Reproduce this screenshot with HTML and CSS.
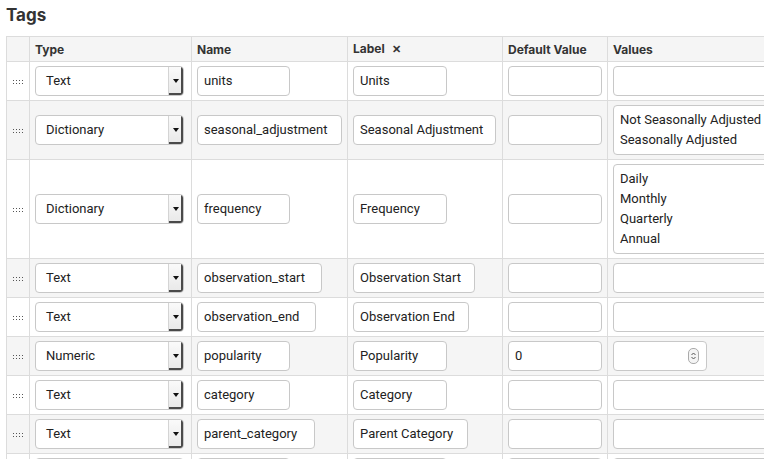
FILE: index.html
```html
<!DOCTYPE html>
<html>
<head>
<meta charset="utf-8">
<link rel="stylesheet" href="styles.css">
</head>
<body>
<h2 class="title">Tags</h2>
<div class="wrap">
<table class="tags">
  <colgroup>
    <col class="c-handle"><col class="c-type"><col class="c-name"><col class="c-label"><col class="c-def"><col class="c-vals">
  </colgroup>
  <thead>
    <tr><th></th><th>Type</th><th>Name</th><th>Label <span class="x">✕</span></th><th>Default Value</th><th>Values</th></tr>
  </thead>
  <tbody>
    <tr>
      <td class="h"><svg class="grip" width="10" height="4" viewBox="0 0 10 4"><g fill="#555"><rect x="0" y="0" width="1" height="1"/><rect x="3" y="0" width="1" height="1"/><rect x="6" y="0" width="1" height="1"/><rect x="9" y="0" width="1" height="1"/><rect x="0" y="3" width="1" height="1"/><rect x="3" y="3" width="1" height="1"/><rect x="6" y="3" width="1" height="1"/><rect x="9" y="3" width="1" height="1"/></g></svg></td>
      <td><div class="sel"><span class="sv">Text</span><span class="arr"></span></div></td>
      <td><div class="inp" style="width:93px">units</div></td>
      <td><div class="inp" style="width:94px">Units</div></td>
      <td><div class="inp w-def"></div></td>
      <td><div class="inp w-val"></div></td>
    </tr>
    <tr class="alt">
      <td class="h"><svg class="grip" width="10" height="4" viewBox="0 0 10 4"><g fill="#555"><rect x="0" y="0" width="1" height="1"/><rect x="3" y="0" width="1" height="1"/><rect x="6" y="0" width="1" height="1"/><rect x="9" y="0" width="1" height="1"/><rect x="0" y="3" width="1" height="1"/><rect x="3" y="3" width="1" height="1"/><rect x="6" y="3" width="1" height="1"/><rect x="9" y="3" width="1" height="1"/></g></svg></td>
      <td><div class="sel"><span class="sv">Dictionary</span><span class="arr"></span></div></td>
      <td><div class="inp" style="width:145px">seasonal_adjustment</div></td>
      <td><div class="inp" style="width:143px">Seasonal Adjustment</div></td>
      <td><div class="inp w-def"></div></td>
      <td><div class="list"><div>Not Seasonally Adjusted</div><div>Seasonally Adjusted</div></div></td>
    </tr>
    <tr>
      <td class="h"><svg class="grip" width="10" height="4" viewBox="0 0 10 4"><g fill="#555"><rect x="0" y="0" width="1" height="1"/><rect x="3" y="0" width="1" height="1"/><rect x="6" y="0" width="1" height="1"/><rect x="9" y="0" width="1" height="1"/><rect x="0" y="3" width="1" height="1"/><rect x="3" y="3" width="1" height="1"/><rect x="6" y="3" width="1" height="1"/><rect x="9" y="3" width="1" height="1"/></g></svg></td>
      <td><div class="sel"><span class="sv">Dictionary</span><span class="arr"></span></div></td>
      <td><div class="inp" style="width:93px">frequency</div></td>
      <td><div class="inp" style="width:94px">Frequency</div></td>
      <td><div class="inp w-def"></div></td>
      <td><div class="list"><div>Daily</div><div>Monthly</div><div>Quarterly</div><div>Annual</div></div></td>
    </tr>
    <tr class="alt">
      <td class="h"><svg class="grip" width="10" height="4" viewBox="0 0 10 4"><g fill="#555"><rect x="0" y="0" width="1" height="1"/><rect x="3" y="0" width="1" height="1"/><rect x="6" y="0" width="1" height="1"/><rect x="9" y="0" width="1" height="1"/><rect x="0" y="3" width="1" height="1"/><rect x="3" y="3" width="1" height="1"/><rect x="6" y="3" width="1" height="1"/><rect x="9" y="3" width="1" height="1"/></g></svg></td>
      <td><div class="sel"><span class="sv">Text</span><span class="arr"></span></div></td>
      <td><div class="inp" style="width:125px">observation_start</div></td>
      <td><div class="inp" style="width:122px">Observation Start</div></td>
      <td><div class="inp w-def"></div></td>
      <td><div class="inp w-val"></div></td>
    </tr>
    <tr>
      <td class="h"><svg class="grip" width="10" height="4" viewBox="0 0 10 4"><g fill="#555"><rect x="0" y="0" width="1" height="1"/><rect x="3" y="0" width="1" height="1"/><rect x="6" y="0" width="1" height="1"/><rect x="9" y="0" width="1" height="1"/><rect x="0" y="3" width="1" height="1"/><rect x="3" y="3" width="1" height="1"/><rect x="6" y="3" width="1" height="1"/><rect x="9" y="3" width="1" height="1"/></g></svg></td>
      <td><div class="sel"><span class="sv">Text</span><span class="arr"></span></div></td>
      <td><div class="inp" style="width:119px">observation_end</div></td>
      <td><div class="inp" style="width:116px">Observation End</div></td>
      <td><div class="inp w-def"></div></td>
      <td><div class="inp w-val"></div></td>
    </tr>
    <tr class="alt">
      <td class="h"><svg class="grip" width="10" height="4" viewBox="0 0 10 4"><g fill="#555"><rect x="0" y="0" width="1" height="1"/><rect x="3" y="0" width="1" height="1"/><rect x="6" y="0" width="1" height="1"/><rect x="9" y="0" width="1" height="1"/><rect x="0" y="3" width="1" height="1"/><rect x="3" y="3" width="1" height="1"/><rect x="6" y="3" width="1" height="1"/><rect x="9" y="3" width="1" height="1"/></g></svg></td>
      <td><div class="sel"><span class="sv">Numeric</span><span class="arr"></span></div></td>
      <td><div class="inp" style="width:93px">popularity</div></td>
      <td><div class="inp" style="width:94px">Popularity</div></td>
      <td><div class="inp w-def">0</div></td>
      <td><div class="inp w-num"><span class="spin"><svg width="7" height="10" viewBox="0 0 7 10"><path d="M1.5 4 L3.5 2 L5.5 4 M1.5 6 L3.5 8 L5.5 6" fill="none" stroke="#555" stroke-width="1"/></svg></span></div></td>
    </tr>
    <tr>
      <td class="h"><svg class="grip" width="10" height="4" viewBox="0 0 10 4"><g fill="#555"><rect x="0" y="0" width="1" height="1"/><rect x="3" y="0" width="1" height="1"/><rect x="6" y="0" width="1" height="1"/><rect x="9" y="0" width="1" height="1"/><rect x="0" y="3" width="1" height="1"/><rect x="3" y="3" width="1" height="1"/><rect x="6" y="3" width="1" height="1"/><rect x="9" y="3" width="1" height="1"/></g></svg></td>
      <td><div class="sel"><span class="sv">Text</span><span class="arr"></span></div></td>
      <td><div class="inp" style="width:93px">category</div></td>
      <td><div class="inp" style="width:94px">Category</div></td>
      <td><div class="inp w-def"></div></td>
      <td><div class="inp w-val"></div></td>
    </tr>
    <tr class="alt">
      <td class="h"><svg class="grip" width="10" height="4" viewBox="0 0 10 4"><g fill="#555"><rect x="0" y="0" width="1" height="1"/><rect x="3" y="0" width="1" height="1"/><rect x="6" y="0" width="1" height="1"/><rect x="9" y="0" width="1" height="1"/><rect x="0" y="3" width="1" height="1"/><rect x="3" y="3" width="1" height="1"/><rect x="6" y="3" width="1" height="1"/><rect x="9" y="3" width="1" height="1"/></g></svg></td>
      <td><div class="sel"><span class="sv">Text</span><span class="arr"></span></div></td>
      <td><div class="inp" style="width:118px">parent_category</div></td>
      <td><div class="inp" style="width:115px">Parent Category</div></td>
      <td><div class="inp w-def"></div></td>
      <td><div class="inp w-val"></div></td>
    </tr>
    <tr>
      <td class="h"><svg class="grip" width="10" height="4" viewBox="0 0 10 4"><g fill="#555"><rect x="0" y="0" width="1" height="1"/><rect x="3" y="0" width="1" height="1"/><rect x="6" y="0" width="1" height="1"/><rect x="9" y="0" width="1" height="1"/><rect x="0" y="3" width="1" height="1"/><rect x="3" y="3" width="1" height="1"/><rect x="6" y="3" width="1" height="1"/><rect x="9" y="3" width="1" height="1"/></g></svg></td>
      <td><div class="sel"><span class="sv"></span><span class="arr"></span></div></td>
      <td><div class="inp" style="width:93px"></div></td>
      <td><div class="inp" style="width:94px"></div></td>
      <td><div class="inp w-def"></div></td>
      <td><div class="inp w-val"></div></td>
    </tr>
  </tbody>
</table>
</div>
</body>
</html>
```
FILE: styles.css
```css
html, body {
  margin: 0;
  padding: 0;
  background: #fff;
  overflow: hidden;
}
body {
  font-family: Roboto, Inter, "Liberation Sans", sans-serif;
  color: #222;
  width: 764px;
  height: 459px;
}
.title {
  margin: 0;
  padding: 4px 0 0 6px;
  font-family: Inter, Roboto, sans-serif;
  font-size: 17px;
  font-weight: 700;
  line-height: 22px;
  color: #333;
  height: 32px;
  box-sizing: border-box;
}
.wrap {
  padding: 4px 0 0 6px;
}
.tags {
  border-collapse: collapse;
  table-layout: fixed;
  width: 900px;
}
.c-handle { width: 23px; }
.c-type { width: 162px; }
.c-name { width: 156px; }
.c-label { width: 155px; }
.c-def { width: 105px; }
.c-vals { width: 299px; }
.tags th, .tags td {
  border: 1px solid #dcdcdc;
  padding: 4px 5px;
  vertical-align: middle;
  text-align: left;
}
.tags th {
  background: #f5f5f5;
  font-family: Inter, Roboto, sans-serif;
  font-size: 12px;
  font-weight: 700;
  color: #333;
  height: 15px;
  line-height: 15px;
  padding: 4px 5px 4px 5px;
}
.x {
  font-size: 11px;
  margin-left: 4px;
  color: #333;
}
.tags tr.alt td { background: #f5f5f5; }
.tags td.h {
  padding: 0;
  text-align: center;
}
.grip {
  display: inline-block;
  vertical-align: middle;
}
.sel {
  display: flex;
  align-items: stretch;
  width: 149px;
  height: 30px;
  box-sizing: border-box;
  border: 1px solid #c8c8c8;
  border-radius: 4px;
  background: #fff;
  overflow: hidden;
}
.sv {
  flex: 1;
  font-size: 13px;
  line-height: 28px;
  padding-left: 10px;
}
.arr {
  width: 14px;
  background: linear-gradient(#fafafa, #e8e8e8);
  border-left: 1px solid #d4d4d4;
  box-shadow: inset -2px -2px 0 #4a4a4a;
  position: relative;
}
.arr::after {
  content: "";
  position: absolute;
  left: 4px;
  top: 12px;
  border-left: 3px solid transparent;
  border-right: 3px solid transparent;
  border-top: 4px solid #111;
}
.inp {
  height: 30px;
  box-sizing: border-box;
  border: 1px solid #c8c8c8;
  border-radius: 4px;
  background: #fff;
  font-size: 13px;
  line-height: 28px;
  padding: 0 6px;
  white-space: nowrap;
  overflow: hidden;
  display: flex;
  align-items: center;
}
.w-def { width: 94px; }
.w-val { width: 260px; }
.w-num { width: 94px; justify-content: flex-end; padding-right: 7px; }
.spin {
  display: flex;
  align-items: center;
  justify-content: center;
  width: 9px;
  height: 14px;
  border: 1px solid #aaa;
  border-radius: 5px;
  background: #f4f4f4;
}
.list {
  width: 260px;
  box-sizing: border-box;
  border: 1px solid #c8c8c8;
  border-radius: 4px;
  background: #fff;
  font-size: 13px;
  line-height: 20px;
  padding: 4px 6px;
}
```
